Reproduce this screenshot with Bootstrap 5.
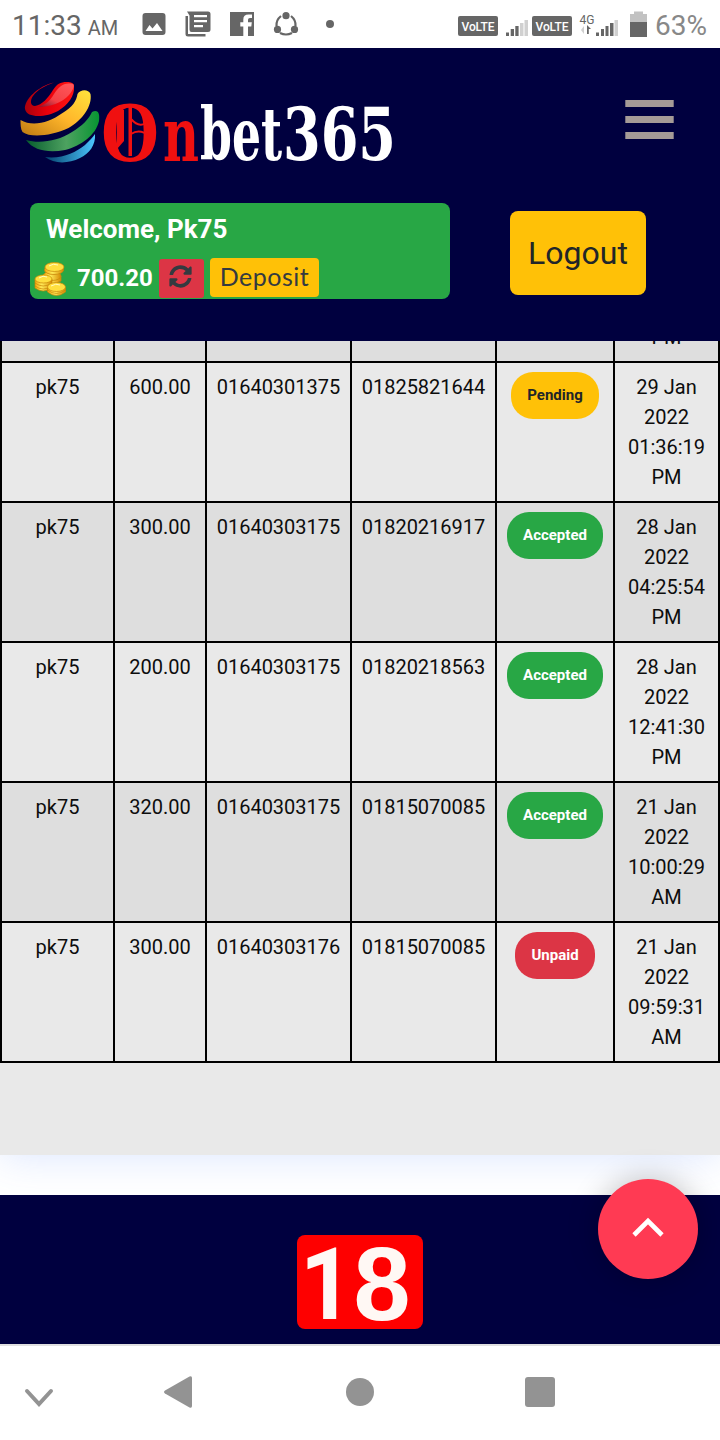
<!DOCTYPE html>
<html lang="en">
<head>
<meta charset="utf-8">
<meta name="viewport" content="width=device-width, initial-scale=1">
<title>Onbet365</title>
<link href="https://cdn.jsdelivr.net/npm/bootstrap@5.3.0/dist/css/bootstrap.min.css" rel="stylesheet">
<style>
  html { overflow: hidden; }
  body { font-family: Roboto, "Liberation Sans", sans-serif; width: 720px; height: 1440px; color: #0d0d0d; overflow: hidden; }
  svg { display: block; flex: none; overflow: visible; }
  .status { height: 48px; color: #666; font-size: 28px; line-height: 52px; }
  .status small { font-size: 20px; line-height: 57px; margin-left: 6px; }
  .pct { color: #888; }
  .top { height: 293px; background: #00003f; position: relative; z-index: 2; }
  .brandline { height: 155px; padding: 34px 46px 0 20px; }
  .wallet { width: 420px; height: 96px; background: #28a745; border-radius: 8px; color: #fff; font-weight: 700; }
  .hello { font-size: 26px; line-height: 30px; padding: 11px 0 0 16px; height: 55px; }
  .money { font-size: 24px; line-height: 40px; }
  .refresh { width: 45px; height: 39px; background: #dc3545; border-radius: 3px; }
  .deposit { width: 109px; height: 39px; border-radius: 4px; font: 400 25px/37px Lato, sans-serif; color: #343a40; background: #ffc107; letter-spacing: .5px; }
  .logout { width: 136px; height: 84px; font-size: 32px; line-height: 84px; color: #212529; background: #ffc107; border-radius: 8px; margin-top: 8px; }
  .sheet { height: 814px; background: #e9e9e9; box-shadow: 0 0 40px rgba(82,133,255,.22); }
  .history { border-collapse: separate; border-spacing: 0; table-layout: fixed; width: 720px; font-size: 20px; line-height: 30px; text-align: center; }
  .history td { height: 140px; padding: 9px 0; vertical-align: top; border: solid #000; border-width: 0 2px 2px 0; color: #0d0d0d; }
  .history td:first-child { border-left-width: 2px; }
  .history td:last-child { padding: 9px 12px; }
  .history tr:nth-child(odd) td { background: #dedede; }
  .history tr.cut td { height: 22px; padding: 0; }
  .peek { height: 20px; overflow: hidden; }
  .peek span { display: block; margin-top: -19px; }
  .pill { display: block; width: fit-content; margin: 0 auto; height: 47px; border-radius: 22px; padding: 0 16px; font-size: 15px; font-weight: 700; line-height: 46px; color: #fff; }
  .pending { background: #ffc107; color: #212529; }
  .accepted { background: #28a745; }
  .unpaid { background: #dc3545; }
  .foot { height: 149px; background: #00003f; margin-top: 40px; padding-top: 40px; position: relative; }
  .totop { position: absolute; right: 22px; top: -16px; width: 100px; height: 100px; background: #ff3a53; box-shadow: 0 0 30px rgba(0,0,0,.25); }
  .navkeys { height: 96px; background: #fff; border-top: 2px solid #e0e0e0; }
</style>
</head>
<body class="bg-white">
<div class="status d-flex">
  <div class="d-flex" style="padding-left:12px;width:142px">11:33<small>AM</small></div>
  <svg width="200" height="48" viewBox="142 0 200 48" fill="#666">
    <path fill-rule="evenodd" d="M145.500 13h17q3 0 3 3v16q0 3-3 3h-17q-3 0-3-3v-16q0-3 3-3zM145.500 31h17l-5.500-8-4.500 5.500-3-3.500z"/>
    <path fill-rule="evenodd" d="M187 11.500h21q2.500 0 2.500 2.500v15.500q0 2.500-2.500 2.500h-16.500q-2 0-2-2.500v-14zM194 15h13v2.200h-13zm0 5h13v2.200h-13zm0 5h9v2.200h-9z"/>
    <path d="M185.500 16h2.500v18h17.500v2.500h-17.500q-2.500 0-2.500-2.500z"/>
    <path d="M230 12h24v24h-6v-9.500h3.300l.5-4.200H248v-2.500q0-1.800 2-1.800h2v-3.600h-3.500q-5.200 0-5.200 5v2.900h-3v4.200h3V36H230z"/>
    <g fill="none" stroke="#666" stroke-width="2.200"><path d="M281 16q-5 4-4.500 10M291 16q5 4 4.500 10M280 33q6 3 12 0"/></g>
    <circle cx="286" cy="15.700" r="3.600"/><circle cx="277.500" cy="29.400" r="3.600"/><circle cx="294.500" cy="29.400" r="3.600"/>
    <circle cx="330" cy="24" r="4"/>
  </svg>
  <svg class="ms-auto" width="198" height="48" viewBox="458 0 198 48" font-family="Roboto, sans-serif">
    <rect x="458" y="16" width="40" height="20" rx="2" fill="#666"/>
    <rect x="532" y="16" width="40" height="20" rx="2" fill="#666"/>
    <g fill="#fff" font-size="12" font-weight="500"><text x="461.500" y="30.500" textLength="33">VoLTE</text><text x="535.500" y="30.500" textLength="33">VoLTE</text></g>
    <g fill="#666"><path d="M506 32.500h3v3.500h-3zM510.700 29h3.300v7h-3.300zM515.300 26h3.300v10h-3.300zM596 32.500h3v3.500h-3zM601 29h3v7h-3zM605.500 26h3v10h-3zM610 23h3.500v13H610z"/>
    <text x="579.500" y="24" font-size="12.500" textLength="15" lengthAdjust="spacingAndGlyphs">4G</text><path d="M587 25l4 4h-2.200v5h-1.800z"/></g>
    <path fill="#d0d0d0" d="M520 23h3.500v13H520zM524.500 20h3.500v16h-3.500zM614.500 20h3.500v16h-3.500zM584 26v8l-3-4z"/>
    <path fill="#c2c2c2" d="M630 14h4v-2.500h9V14h4v9h-17z"/><path fill="#666" d="M630 22h17v15h-17z"/>
  </svg>
  <div class="pct" style="width:65px;margin-left:-1px">63%</div>
</div>

<header class="top">
  <div class="brandline d-flex justify-content-between align-items-start">
    <svg width="376" height="80" viewBox="20 82 376 80">
      <defs>
        <linearGradient id="r" x1="0" x2="1"><stop stop-color="#a9000c"/><stop offset=".45" stop-color="#e8000c"/><stop offset="1" stop-color="#ff1614"/></linearGradient>
        <linearGradient id="ri" x1="0" y1="1" x2=".8" y2="0"><stop stop-color="#7b1230"/><stop offset=".4" stop-color="#f44146"/><stop offset="1" stop-color="#ff5558"/></linearGradient>
        <linearGradient id="y" x1="0" y1="1" x2="1" y2="0"><stop stop-color="#bd7a12"/><stop offset=".5" stop-color="#ffb52a"/><stop offset="1" stop-color="#ffe33c"/></linearGradient>
        <linearGradient id="g" x1="0" x2="1"><stop stop-color="#075c2e"/><stop offset=".55" stop-color="#4da260"/><stop offset="1" stop-color="#079532"/></linearGradient>
        <linearGradient id="b" x1="0" x2="1"><stop stop-color="#03416b"/><stop offset="1" stop-color="#4bc6ff"/></linearGradient>
      </defs>
      <path fill="url(#r)" d="M54 82.500C38 86 24 100 25 109c2 10 22 8 33 2 10-6 17-15 16-25 0-3-3-4-7-4-7 0-10 2-14 8-5 8-11 15-18 16-5 0-5-6-2-10 5-7 12-10 21-13.500z"/>
      <path fill="url(#ri)" d="M73 84c-10-2-14 3-19 10-4 7-9 11-16 13 12 0 24-4 31-12 4-5 6-9 4-11z"/>
      <path fill="url(#y)" d="M20.500 120c12 7 28 3 42-7 10-6 14-12 15-19 3-5 11-5 13 0 2 12-8 26-22 34-17 8-38 10-46 4-2-3-2-8-2-12z"/>
      <path fill="url(#g)" d="M26 140c14 4 32 1 46-8 10-6 17-13 20-20 6-3 8 1 7 9-3 14-18 25-34 29-16 3-31 1-39-10z"/>
      <path fill="url(#b)" d="M45 157c17 2 30-4 40-12 4-4 8-8 10-11 1 11-6 20-15 24-12 6-26 6-35-1z"/>
      <!-- wordmark -->
      <g font-family="'DejaVu Serif Condensed', 'DejaVu Serif', serif" font-weight="700">
        <g fill="#f01010">
          <text x="100" y="161" font-size="86" font-family="'Liberation Serif', serif" font-weight="700" textLength="60" lengthAdjust="spacingAndGlyphs">O</text>
          <path d="M117 110h7v31l-7 8zM128.500 106h3.500v50h-3.500z"/>
          <path d="M131 119q10 11 18 1M131 134q9-6 18 2" fill="none" stroke="#f01010" stroke-width="2"/>
          <text x="163" y="161" font-size="74" textLength="36" lengthAdjust="spacingAndGlyphs">n</text>
        </g>
        <text x="200" y="160" font-size="73" fill="#fff" textLength="82" lengthAdjust="spacingAndGlyphs">bet</text>
        <text x="283" y="160" font-size="73" fill="#fff" textLength="113" lengthAdjust="spacingAndGlyphs">365</text>
      </g>
    </svg>
    <svg width="49" height="39" viewBox="0 0 49 39" style="margin-top:18px"><path fill="#a59b97" d="M.3 0h48.400v7H.3zM.3 16h48.400v7H.3zM.3 32h48.400v7H.3z"/></svg>
  </div>
  <div class="d-flex" style="padding-left:30px;gap:60px">
    <div class="wallet">
      <div class="hello">Welcome, Pk75</div>
      <div class="money d-flex align-items-start">
        <svg width="36" height="38" viewBox="30 258 36 38">
          <defs><linearGradient id="c" x1="0" x2="1"><stop stop-color="#f3a60c"/><stop offset=".4" stop-color="#ffe957"/><stop offset="1" stop-color="#d68b04"/></linearGradient></defs>
          <g fill="url(#c)" stroke="#c8860a" stroke-width=".7">
            <path d="M43 276v6q9 4 18-1v-5z"/><ellipse cx="52" cy="276" rx="9" ry="4.500"/><path d="M45 272q9 5 18-1v-4H45z"/><ellipse cx="54" cy="270" rx="9.500" ry="4.500"/><ellipse cx="54.500" cy="267" rx="9.500" ry="4.500" fill="#ffdf3f"/>
            <path d="M35 279v9q8 6 17 0v-9z"/><path d="M35 283q8 6 17 0M35 286q8 6 17 0" fill="none"/><ellipse cx="43.500" cy="279" rx="8.500" ry="4" fill="#ffdf3f"/>
            <path d="M47.500 288v4q9 7 18 0v-4z"/><path d="M47.500 290q9 7 18 0" fill="none"/><ellipse cx="56.500" cy="287" rx="9" ry="4.500" fill="#ffdf3f"/>
          </g>
          <path d="M49 266q4-3 9-1M39 278q4-3 8-1M51 286q5-3 9-1" stroke="#fffbc0" fill="none"/>
        </svg>
        <span style="margin-left:11px;width:82px">700.20</span>
        <div class="refresh d-flex align-items-center justify-content-center" style="margin-top:1px">
          <svg width="23" height="23" viewBox="0 0 512 512" fill="#343a40" style="margin:-5px 2px 0 0"><path d="M370.720 133.280C339.458 104.008 298.888 87.962 255.848 88c-77.458.068-144.328 53.178-162.791 126.850-1.344 5.363-6.122 9.150-11.651 9.150H24.103c-7.498 0-13.194-6.807-11.807-14.176C33.933 94.924 134.813 8 256 8c66.448 0 126.791 26.136 171.315 68.685L463.030 40.970C478.149 25.851 504 36.559 504 57.941V192c0 13.255-10.745 24-24 24H345.941c-21.382 0-32.090-25.851-16.971-40.971l41.750-41.749zM32 296h134.059c21.382 0 32.090 25.851 16.971 40.971l-41.750 41.750c31.262 29.273 71.835 45.319 114.876 45.280 77.418-.07 144.315-53.144 162.787-126.849 1.344-5.363 6.122-9.150 11.651-9.150h57.304c7.498 0 13.194 6.807 11.807 14.176C478.067 417.076 377.187 504 256 504c-66.448 0-126.791-26.136-171.315-68.685L48.970 471.030C33.851 486.149 8 475.441 8 454.059V320c0-13.255 10.745-24 24-24z"/></svg>
        </div>
        <a class="deposit text-center text-decoration-none" style="margin-left:6px" href="#">Deposit</a>
      </div>
    </div>
    <a class="logout text-center text-decoration-none" href="#">Logout</a>
  </div>
</header>

<main class="sheet">
  <table class="history">
    <colgroup><col style="width:115px"><col style="width:92px"><col style="width:145px"><col style="width:145px"><col style="width:118px"><col style="width:105px"></colgroup>
    <tbody>
      <tr class="cut"><td></td><td></td><td></td><td></td><td></td><td><div class="peek"><span>PM</span></div></td></tr>
      <tr><td>pk75</td><td>600.00</td><td>01640301375</td><td>01825821644</td><td><span class="pill pending">Pending</span></td><td>29 Jan 2022 01:36:19 PM</td></tr>
      <tr><td>pk75</td><td>300.00</td><td>01640303175</td><td>01820216917</td><td><span class="pill accepted">Accepted</span></td><td>28 Jan 2022 04:25:54 PM</td></tr>
      <tr><td>pk75</td><td>200.00</td><td>01640303175</td><td>01820218563</td><td><span class="pill accepted">Accepted</span></td><td>28 Jan 2022 12:41:30 PM</td></tr>
      <tr><td>pk75</td><td>320.00</td><td>01640303175</td><td>01815070085</td><td><span class="pill accepted">Accepted</span></td><td>21 Jan 2022 10:00:29 AM</td></tr>
      <tr><td>pk75</td><td>300.00</td><td>01640303176</td><td>01815070085</td><td><span class="pill unpaid">Unpaid</span></td><td>21 Jan 2022 09:59:31 AM</td></tr>
    </tbody>
  </table>
</main>

<footer class="foot d-flex justify-content-center align-items-start">
  <svg width="126" height="94" viewBox="0 0 126 94">
    <rect width="126" height="94" rx="8" fill="#fe0000"/>
    <g fill="#fff8f4" font-weight="700">
      <text x="3" y="84" font-family="Roboto, sans-serif" font-size="101" textLength="53" lengthAdjust="spacingAndGlyphs">1</text>
      <text x="56.500" y="85" font-family="'Liberation Sans', sans-serif" font-size="104" textLength="57" lengthAdjust="spacingAndGlyphs">8</text>
    </g>
  </svg>
  <a class="totop rounded-circle d-flex align-items-center justify-content-center" href="#" aria-label="Back to top">
    <svg width="34" height="22" viewBox="0 0 34 22" style="margin-top:-2px"><path d="M3 18L17 4l14 14" fill="none" stroke="#fff" stroke-width="4.600"/></svg>
  </a>
</footer>
<nav class="navkeys">
  <svg width="720" height="94" viewBox="0 1346 720 94" fill="#939393">
    <path d="M27 1391l12 13 12-13" fill="none" stroke="#939393" stroke-width="4" stroke-linecap="round"/>
    <path d="M165 1390.500l24.500-14q2.500-1 2.500 1.500v28q0 2.500-2.500 1.500l-24.500-14q-2-1.500 0-3z"/>
    <circle cx="360" cy="1392" r="14"/>
    <rect x="525" y="1377" width="30" height="30" rx="3"/>
  </svg>
</nav>
<script src="https://cdn.jsdelivr.net/npm/bootstrap@5.3.0/dist/js/bootstrap.bundle.min.js"></script>
</body>
</html>
